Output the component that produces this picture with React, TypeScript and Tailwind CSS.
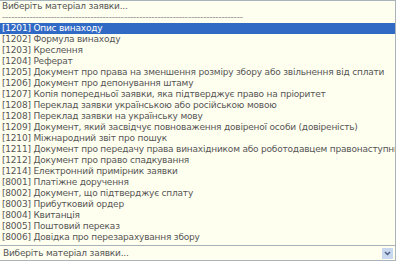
import React from "react";

const items = [
  "[1201] Опис винаходу",
  "[1202] Формула винаходу",
  "[1203] Креслення",
  "[1204] Реферат",
  "[1205] Документ про права на зменшення розміру збору або звільнення від сплати",
  "[1206] Документ про депонування штаму",
  "[1207] Копія попередньої заявки, яка підтверджує право на пріоритет",
  "[1208] Переклад заявки українською або російською мовою",
  "[1208] Переклад заявки на українську мову",
  "[1209] Документ, який засвідчує повноваження довіреної особи (довіреність)",
  "[1210] Міжнародний звіт про пошук",
  "[1211] Документ про передачу права винахідником або роботодавцем правонаступнику",
  "[1212] Документ про право спадкування",
  "[1214] Електронний примірник заявки",
  "[8001] Платіжне доручення",
  "[8002] Документ, що підтверджує сплату",
  "[8003] Прибутковий ордер",
  "[8004] Квитанція",
  "[8005] Поштовий переказ",
  "[8006] Довідка про перезарахування збору",
];

export default function App() {
  return (
    <div
      className="w-[396px] h-[261px] bg-[#fffff0] overflow-hidden flex flex-col text-[9px] leading-[11px] tracking-[-0.2px] text-[#555555]"
      style={{ fontFamily: '"DejaVu Sans", sans-serif' }}
    >
      <div className="h-[245px] border-t border-r border-[#a9b3bc] flex flex-col overflow-hidden">
        <div className="h-[11px] pl-[2px] whitespace-nowrap">Виберіть матеріал заявки...</div>
        <div className="h-[11px] pl-[2px] whitespace-nowrap text-[#8a8a8a]">-------------------------------------------------------------------------------</div>
        {items.map((t, i) => (
          <div
            key={i}
            className={
              "h-[11px] pl-[2px] whitespace-nowrap " +
              (i === 0 ? "bg-[#316ac5] text-white" : "")
            }
          >
            {t}
          </div>
        ))}
      </div>
      <div className="h-[16px] border-t border-b border-r border-[#a9b3bc] flex items-center justify-between pl-[3px] pr-[2px]">
        <span className="whitespace-nowrap">Виберіть матеріал заявки...</span>
        <div className="w-[11px] h-[11px] bg-[#c9d8ee] flex items-center justify-center">
          <svg width="7" height="5" viewBox="0 0 7 5">
            <path d="M1 1 L3.5 3.5 L6 1" stroke="#4d6185" strokeWidth="1.5" fill="none" />
          </svg>
        </div>
      </div>
    </div>
  );
}
